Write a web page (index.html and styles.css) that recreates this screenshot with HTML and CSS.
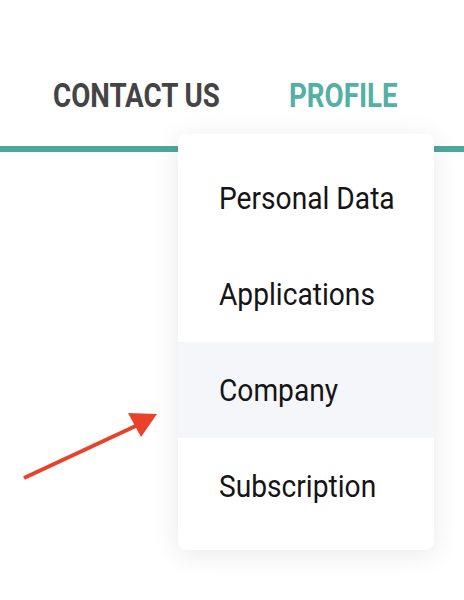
FILE: index.html
```html
<!DOCTYPE html>
<html lang="en">

<head>
    <meta charset="UTF-8">
    <meta name="viewport" content="width=device-width, initial-scale=1.0">
    <title>Profile menu</title>
    <link rel="stylesheet" href="styles.css">
</head>

<body>
    <header class="top-bar">
        <nav class="nav">
            <a href="#" class="nav-link"><span class="squeeze">CONTACT US</span></a>
            <a href="#" class="nav-link active"><span class="squeeze">PROFILE</span></a>
        </nav>
    </header>

    <div class="dropdown">
        <a href="#" class="dropdown-item"><span class="squeeze">Personal Data</span></a>
        <a href="#" class="dropdown-item"><span class="squeeze">Applications</span></a>
        <a href="#" class="dropdown-item hover"><span class="squeeze">Company</span></a>
        <a href="#" class="dropdown-item"><span class="squeeze">Subscription</span></a>
    </div>

    <svg class="pointer" width="180" height="90" viewBox="0 400 180 90">
        <line x1="24" y1="478" x2="140" y2="424" stroke="#e8432a" stroke-width="4" />
        <polygon points="157,414 128,413 141,437" fill="#e8432a" />
    </svg>
</body>

</html>
```

FILE: styles.css
```css
body {
    margin: 0;
    font-family: 'Roboto', sans-serif;
    background: #fff;
    height: 100vh;
    overflow: hidden;
    position: relative;
}

.top-bar {
    height: 146px;
    border-bottom: 6px solid #4fa79c;
    box-sizing: content-box;
}

.nav {
    display: flex;
    padding: 75px 0 0 53px;
}

.nav-link {
    font-size: 34px;
    font-weight: 700;
    line-height: 40px;
    color: #444;
    text-decoration: none;
}

.nav-link:first-child {
    width: 236px;
}

.nav-link.active {
    color: #52b0a5;
}

.squeeze {
    display: inline-block;
    transform: scaleX(0.815);
    transform-origin: left center;
    white-space: nowrap;
}

.dropdown {
    position: absolute;
    left: 178px;
    top: 134px;
    width: 256px;
    padding: 16px 0;
    background: #fff;
    border-radius: 8px;
    box-shadow: 0 4px 28px rgba(0, 0, 0, 0.09);
}

.dropdown-item {
    display: flex;
    align-items: center;
    height: 96px;
    padding-left: 41px;
    font-size: 32px;
    color: #151515;
    text-decoration: none;
}

.dropdown-item .squeeze {
    transform: scaleX(0.88);
}

.dropdown-item.hover {
    background: #f5f6fa;
}

.pointer {
    position: absolute;
    left: 0;
    top: 400px;
}
```
